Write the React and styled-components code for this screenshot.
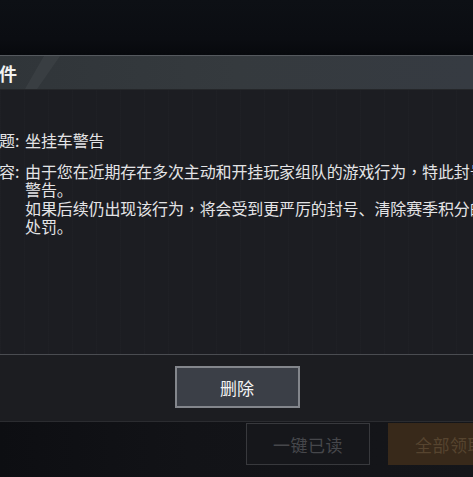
import React from 'react';
import styled, { createGlobalStyle } from 'styled-components';

const Global = createGlobalStyle`
  html, body { margin: 0; padding: 0; background: #0c0e13; }
  body { font-family: "Noto Sans CJK SC", "Noto Sans", sans-serif; }
`;

const Page = styled.div`
  width: 473px;
  height: 477px;
  overflow: hidden;
  display: flex;
  flex-direction: column;
  background: #0c0e13;
`;

const TopSpace = styled.div`
  height: 55px;
  background: linear-gradient(180deg, #0d1015 0%, #0b0d12 70%, #07090d 100%);
`;

const Dialog = styled.div`
  display: flex;
  flex-direction: column;
  background: #1c1d22;
`;

const Header = styled.div`
  position: relative;
  height: 33px;
  border-top: 1px solid #55595e;
  border-bottom: 1px solid #25272a;
  background: linear-gradient(90deg, #303539 0%, #353a3e 50%, #363b42 100%);
  display: flex;
  align-items: center;
`;

const Stripe = styled.svg`
  position: absolute;
  left: 0;
  top: 0;
  pointer-events: none;
`;

const Title = styled.div`
  position: relative;
  color: #f2f2f2;
  font-size: 18px;
  font-weight: 700;
  margin-left: -1px;
  line-height: 1;
`;

const Body = styled.div`
  height: 264px;
  padding-top: 41px;
  box-sizing: border-box;
  display: flex;
  flex-direction: column;
  gap: 12px;
  background:
    repeating-linear-gradient(90deg, rgba(255,255,255,0.012) 0 1px, transparent 1px 24px),
    #1c1d22;
`;

const Row = styled.div`
  display: grid;
  grid-template-columns: 25px 1fr;
  color: #e4e4e6;
  font-size: 16px;
  line-height: 18.5px;
  text-spacing-trim: space-all;
`;

const Label = styled.span`
  white-space: nowrap;
  margin-left: -1px;
`;

const Text = styled.div`
  white-space: nowrap;
  letter-spacing: -0.12px;
`;

const Punct = styled.span`
  font-family: "Noto Sans CJK TC", "Noto Sans CJK SC", sans-serif;
`;

const Footer = styled.div`
  height: 66px;
  border-top: 1px solid #4a4c51;
  border-bottom: 1px solid #2b2c30;
  display: flex;
  justify-content: center;
  align-items: center;
  background: #1c1d21;
`;

const DeleteButton = styled.button`
  width: 125px;
  height: 42px;
  margin-left: 1px;
  margin-bottom: 2px;
  background: #3b3f47;
  border: 2px solid #83868c;
  color: #f3f3f3;
  font-family: inherit;
  font-size: 17px;
  padding: 0;
`;

const BottomBar = styled.div`
  flex: 1;
  display: flex;
  gap: 18px;
  padding-left: 246px;
  padding-top: 1px;
  background: linear-gradient(90deg, #0d0e12 0%, #121317 40%, #15161a 100%);
`;

const BarButton = styled.div`
  flex: none;
  width: 124px;
  height: 42px;
  box-sizing: border-box;
  display: flex;
  justify-content: center;
  align-items: center;
  font-size: 17px;
  letter-spacing: 0.5px;
  color: ${p => (p.$primary ? '#56442f' : '#46474b')};
  background: ${p => (p.$primary ? '#38291a' : '#16171b')};
  border: 1px solid ${p => (p.$primary ? '#38291a' : '#38393d')};
`;

export default function App() {
  return (
    <Page>
      <Global />
      <TopSpace />
      <Dialog>
        <Header>
          <Stripe width="80" height="33" viewBox="0 0 80 33">
            <polygon points="44,0 60,0 37,33 25,33" fill="#3c4145" opacity="0.8" />
          </Stripe>
          <Title>件</Title>
        </Header>
        <Body>
          <Row>
            <Label>题:</Label>
            <Text>坐挂车警告</Text>
          </Row>
          <Row>
            <Label>容:</Label>
            <Text>
              由于您在近期存在多次主动和开挂玩家组队的游戏行为<Punct>，</Punct>特此封号
              <br />
              警告。
              <br />
              如果后续仍出现该行为<Punct>，</Punct>将会受到更严厉的封号、清除赛季积分的
              <br />
              处罚。
            </Text>
          </Row>
        </Body>
        <Footer>
          <DeleteButton>删除</DeleteButton>
        </Footer>
      </Dialog>
      <BottomBar>
        <BarButton>一键已读</BarButton>
        <BarButton $primary>全部领取</BarButton>
      </BottomBar>
    </Page>
  );
}
